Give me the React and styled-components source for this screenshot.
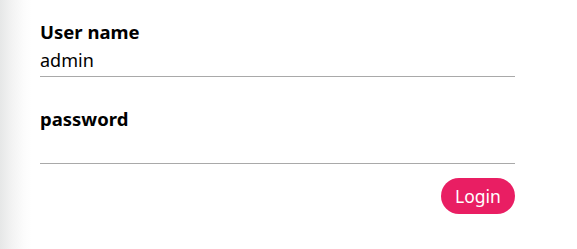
import React from "react";
import styled, { createGlobalStyle } from "styled-components";

const Global = createGlobalStyle`
  html, body { margin: 0; padding: 0; background: #fff; }
  body { font-family: "Noto Sans", "Open Sans", sans-serif; }
`;

const Page = styled.div`
  display: flex;
  width: 577px;
  height: 249px;
  background: linear-gradient(to right, #e6e7e7 0px, #f3f3f3 12px, #fcfcfc 24px, #ffffff 32px);
`;

const Form = styled.form`
  display: flex;
  flex-direction: column;
  width: 475px;
  padding: 20px 0 0 40px;
`;

const Field = styled.div`
  display: flex;
  flex-direction: column;
  margin-bottom: ${(p) => p.$gap || 0}px;
`;

const Label = styled.label`
  font-family: "Noto Sans", sans-serif;
  font-weight: 700;
  font-size: 18.5px;
  line-height: 24px;
  color: #000;
`;

const Input = styled.input`
  font-family: "Noto Sans", sans-serif;
  font-size: 18px;
  color: #000;
  border: none;
  border-bottom: 1px solid #a9a9a9;
  outline: none;
  padding: 0;
  height: 32px;
  background: transparent;
`;

const Actions = styled.div`
  display: flex;
  justify-content: flex-end;
  margin-top: 14px;
`;

const Button = styled.button`
  font-family: "Noto Sans", sans-serif;
  font-size: 17.5px;
  color: #fff;
  background: #e91e63;
  border: none;
  border-radius: 18px;
  height: 36px;
  width: 74px;
  padding: 0;
`;

export default function App() {
  return (
    <>
      <Global />
      <Page>
        <Form onSubmit={(e) => e.preventDefault()}>
          <Field $gap={30}>
            <Label>User name</Label>
            <Input defaultValue="admin" />
          </Field>
          <Field>
            <Label>password</Label>
            <Input type="password" />
          </Field>
          <Actions>
            <Button type="submit">Login</Button>
          </Actions>
        </Form>
      </Page>
    </>
  );
}
